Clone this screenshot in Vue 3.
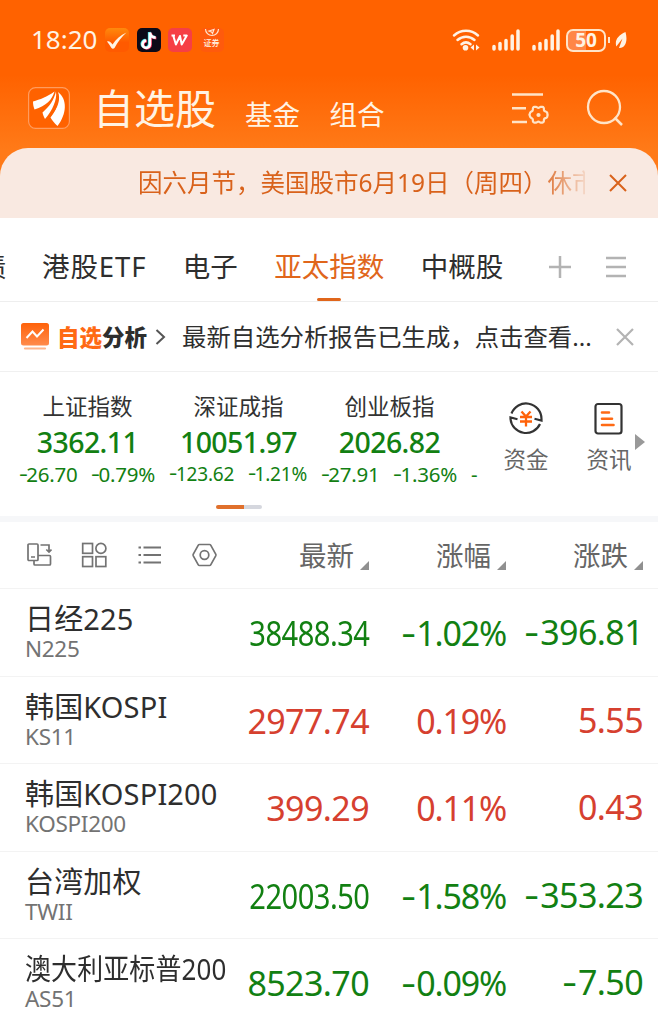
<script setup>
    import { ref } from 'vue'

    const tabs = ['港股ETF', '电子', '亚太指数', '中概股']
    const activeTab = ref('亚太指数')

    const indices = [
        { name: '上证指数', value: '3362.11', diff: '26.70', pct: '0.79%' },
        { name: '深证成指', value: '10051.97', diff: '123.62', pct: '1.21%', small: true },
        { name: '创业板指', value: '2026.82', diff: '27.91', pct: '1.36%' },
    ]

    const columns = ['最新', '涨幅', '涨跌']

    const stocks = [
        { name: '日经225', code: 'N225', price: '38488.34', pct: '1.02%', diff: '396.81', down: true },
        { name: '韩国KOSPI', code: 'KS11', price: '2977.74', pct: '0.19%', diff: '5.55' },
        { name: '韩国KOSPI200', code: 'KOSPI200', price: '399.29', pct: '0.11%', diff: '0.43' },
        { name: '台湾加权', code: 'TWII', price: '22003.50', pct: '1.58%', diff: '353.23', down: true },
        { name: '澳大利亚标普200', code: 'AS51', price: '8523.70', pct: '0.09%', diff: '7.50', down: true, long: true },
    ]
</script>

<template>
    <div class="app">
        <header class="top">
            <div class="status">
                <span class="time">18:20</span>
                <svg class="app-icon" viewBox="0 0 24 24">
                    <defs>
                        <linearGradient id="checkBg" x1="0" y1="0" x2="0" y2="1">
                            <stop offset="0" stop-color="#ff8a0c" />
                            <stop offset=".6" stop-color="#ff5a00" />
                        </linearGradient>
                    </defs>
                    <rect width="24" height="24" rx="5" fill="url(#checkBg)" />
                    <path d="M2 13.500c2-1 4 .5 5.500 3C11 11 15.500 7 21.500 4.500 16.500 9 12.500 14 9.500 20c-1 1-2.500.8-3.200-.2C5 17.500 3.500 15.500 2 13.500z" fill="#fff3e4" />
                </svg>
                <svg class="app-icon" viewBox="0 0 24 24">
                    <rect width="24" height="24" rx="5" fill="#0c0a18" />
                    <g fill="none" stroke-width="2.700">
                        <path d="M12.200 4v11.800a3.700 3.700 0 1 1-3.700-3.700M12.200 4c.4 3 2.500 5 5.800 5.200" stroke="#35e0e4" />
                        <path d="M13.600 5v11.800a3.700 3.700 0 1 1-3.700-3.700M13.600 5c.4 3 2.500 5 5.800 5.200" stroke="#f0305c" />
                        <path d="M12.900 4.500v11.800a3.700 3.700 0 1 1-3.700-3.700M12.900 4.500c.4 3 2.500 5 5.800 5.200" stroke="#fff" />
                    </g>
                </svg>
                <svg class="app-icon" viewBox="0 0 24 24">
                    <rect width="24" height="24" rx="5" fill="#f63f45" />
                    <path d="M3.500 7.500h3.500M5.200 7.500l2.700 9 4.100-8.500 1.700 8.500L18.800 7.500h-3.500" fill="none" stroke="#fff" stroke-width="2" stroke-linejoin="round" />
                </svg>
                <span class="app-icon broker">
                    <svg width="16" height="9" viewBox="0 0 16 9">
                        <path d="M1.500 1a6.500 6.500 0 0 0 13 0M5 3l5-1.500L8.500 5.500 7.500 4z" fill="none" stroke="#ffe6d2" stroke-width="1.200" />
                    </svg>
                    <span>证券</span>
                </span>

                <svg class="wifi" width="28" height="24" viewBox="0 0 28 24">
                    <g fill="none" stroke="#fff3e4" stroke-width="2.500" stroke-linecap="round">
                        <path d="M2 7.500c7-6.200 17-6.200 24 0" />
                        <path d="M5.500 12c5-4.500 12-4.500 17 0" />
                        <path d="M9.500 16.200c2.700-2.200 6.300-2.200 9 0" />
                    </g>
                    <circle cx="13.500" cy="19.700" r="2.800" fill="#fff3e4" />
                    <path d="M22 16.500v6l-3.500-3zM24 16.500v6l3.500-3z" fill="#fff3e4" />
                </svg>
                <svg v-for="n in 2" :key="n" class="signal" width="28" height="22" viewBox="0 0 28 22">
                    <path d="M2 17.500V20M8 14.500V20M14 11.500V20M20.200 7V20M26 2V20" fill="none" stroke="#fff3e4" stroke-width="3.500" stroke-linecap="round" />
                </svg>
                <span class="battery">50</span>
                <span class="battery-tip"></span>
                <svg class="leaf" width="12" height="19" viewBox="0 0 12 19">
                    <path d="M10.500 1C3 4.500-.5 9 1.300 15.500L7.500 7.500 4 17c6.500.5 9-7 6.500-16z" fill="#fff3e4" />
                </svg>
            </div>

            <nav class="nav">
                <svg class="logo" width="42" height="42" viewBox="0 0 42 42">
                    <rect x=".6" y=".6" width="40.800" height="40.800" rx="7" fill="#ff6200" stroke="#ff9c5e" stroke-width="1.200" />
                    <path d="M5 14.500C12 12.500 19 10 26.500 4.500 24 13 18.500 18.500 6.500 22.500 5.500 20 5 17.500 5 14.500z" fill="#fff" />
                    <path d="M28 4.500c1.300 8-3.500 19-11 27.500-1-2-2-4-2.500-6.500C21 20 26 13 28 4.500z" fill="#fff" />
                    <path d="M30 5c2.500 6.500 1 14.500-7.500 25.500 1.500 2.500 3.500 5.500 7 8.500C39 27 39.500 12 30 5z" fill="#fff" />
                    <path d="M29 5c2.800 8-1 18-8.500 26" fill="none" stroke="#ff6200" stroke-width="1.200" />
                </svg>
                <h1>自选股</h1>
                <a class="fund">基金</a>
                <a class="group">组合</a>
                <svg class="list-set" width="40" height="34" viewBox="0 0 40 34">
                    <g fill="none" stroke="#ffe4c8" stroke-width="2.400">
                        <path d="M1 3.500h31M1 17.300h14M1 31h15" />
                        <path d="M22 15.500h2c1 0 1.300 1 2.500 1s1.500-1 2.500-1h2c.5 0 1 .5 1.300 1 .5 1-.2 2 .5 3 .6 1 2.700.8 3.200 2 .4 1 .4 4 0 5-.5 1.200-2.600 1-3.200 2-.7 1 0 2-.5 3-.3.500-.8 1-1.300 1h-2c-1 0-1.300-1-2.500-1s-1.500 1-2.500 1h-2c-.5 0-1-.5-1.300-1-.5-1 .2-2-.5-3-.6-1-2-1-2.500-2l-.9-2.500.9-2.500c.5-1 1.900-1 2.500-2 .7-1 0-2 .5-3 .3-.5.800-1 1.300-1z" transform="translate(3 1.700) scale(.92)" />
                    </g>
                    <circle cx="27.500" cy="24" r="2.100" fill="#ffe4c8" />
                </svg>
                <svg class="search" width="38" height="38" viewBox="0 0 38 38">
                    <circle cx="18" cy="18" r="16" fill="none" stroke="#ffe4c8" stroke-width="2.300" />
                    <path d="M28.500 28.500l7.500 7.500" stroke="#ffe4c8" stroke-width="2.500" />
                </svg>
            </nav>

            <div class="notice">
                <p>因六月节，美国股市6月19日（周四）休市</p>
                <svg width="20" height="20" viewBox="0 0 20 20">
                    <path d="M2 2l16 16M18 2L2 18" stroke="#d9621b" stroke-width="2" />
                </svg>
            </div>
        </header>

        <div class="tabs">
            <span class="cut">债</span>
            <a v-for="tab in tabs" :key="tab" :class="{ active: tab === activeTab }" @click="activeTab = tab">{{ tab }}</a>
            <svg class="plus" width="24" height="24" viewBox="0 0 24 24">
                <path d="M12 1v22M1 12h22" stroke="#b3b3b3" stroke-width="2.500" />
            </svg>
            <svg class="menu" width="22" height="22" viewBox="0 0 22 22">
                <path d="M1 2h20M1 11h20M1 20h20" stroke="#b3b3b3" stroke-width="2.400" />
            </svg>
        </div>

        <div class="analysis">
            <svg class="chart" width="28" height="28" viewBox="0 0 28 28">
                <defs>
                    <linearGradient id="chartBg" x1="0" y1="0" x2="0" y2="1">
                        <stop offset="0" stop-color="#ff6209" />
                        <stop offset="1" stop-color="#ff8b4c" />
                    </linearGradient>
                </defs>
                <rect width="28" height="22.500" rx="2.500" fill="url(#chartBg)" />
                <path d="M5.500 15l6-6.500 4.500 5 6.500-7" fill="none" stroke="#fff" stroke-width="2" />
                <path d="M4 25.500h20" stroke="#ffb58c" stroke-width="2.200" stroke-linecap="round" />
            </svg>
            <strong><em>自选</em>分析</strong>
            <svg class="arrow" width="11" height="18" viewBox="0 0 11 18">
                <path d="M1.500 2l7.500 7-7.500 7" fill="none" stroke="#555" stroke-width="2" />
            </svg>
            <p>最新自选分析报告已生成，点击查看...</p>
            <svg class="close" width="18" height="18" viewBox="0 0 18 18">
                <path d="M1 1l16 16M17 1L1 17" stroke="#b3b3b3" stroke-width="2.200" />
            </svg>
        </div>

        <section class="market">
            <div class="indices">
                <div v-for="item in indices" :key="item.name" class="index" :class="{ small: item.small }">
                    <span class="name">{{ item.name }}</span>
                    <span class="value">{{ item.value }}</span>
                    <span class="change"><span><i>-</i>{{ item.diff }}</span><span><i>-</i>{{ item.pct }}</span></span>
                </div>
                <span class="next">-</span>
            </div>
            <div class="tools">
                <div class="tool">
                    <svg width="36" height="36" viewBox="0 0 36 36">
                        <path d="M3.500 12.500A15.500 15.500 0 0 1 33.500 18v1.500L26.500 17.800M32 23A15.500 15.500 0 0 1 2.500 18v-1.500L9.500 18.200" fill="none" stroke="#333" stroke-width="2.200" />
                        <path d="M13.500 10.500l4.500 5 4.500-5M12 16h12M12 20.500h12M18 15.500v10" fill="none" stroke="#ff6209" stroke-width="2.300" />
                    </svg>
                    <span>资金</span>
                </div>
                <div class="tool">
                    <svg width="36" height="36" viewBox="0 0 36 36">
                        <rect x="4.500" y="3" width="26" height="29.500" rx="2.500" fill="none" stroke="#333" stroke-width="2.200" />
                        <path d="M11 11.500h7M11 17.700h10M11 24h11.500" stroke="#ff6a14" stroke-width="2.600" stroke-linecap="round" />
                    </svg>
                    <span>资讯</span>
                </div>
            </div>
            <span class="more"></span>
            <span class="pager"></span>
        </section>

        <section class="list">
            <div class="row head">
                <div class="views">
                    <svg width="26" height="26" viewBox="0 0 26 26">
                        <g fill="none" stroke="#737373" stroke-width="1.700">
                            <rect x="2" y="2" width="10" height="16.500" rx="1" />
                            <path d="M5 15h4M14.500 3H23v7M20.300 7.500L23 10l2.500-2.500M12 13.500h11.500a1 1 0 0 1 1 1V22a1 1 0 0 1-1 1H9a1 1 0 0 1-1-1v-3.500" />
                        </g>
                    </svg>
                    <svg width="26" height="26" viewBox="0 0 26 26">
                        <g fill="none" stroke="#737373" stroke-width="1.700">
                            <rect x="1.700" y="1.500" width="9.800" height="9.800" />
                            <circle cx="19.900" cy="6.400" r="5" />
                            <rect x="1.700" y="14.700" width="9.800" height="9.800" />
                            <rect x="15" y="14.700" width="9.800" height="9.800" />
                        </g>
                    </svg>
                    <svg width="26" height="26" viewBox="0 0 26 26">
                        <path d="M7.500 5.500H25M7.500 13H25M7.500 20.500H25M2.500 5.500H5M2.500 13H5M2.500 20.500H5" stroke="#737373" stroke-width="2.200" />
                    </svg>
                    <svg width="26" height="26" viewBox="0 0 26 26">
                        <path d="M8.500 2.500h10q.8 0 1.200.7l5 9q.4.800 0 1.600l-5 9q-.4.700-1.200.7h-10q-.8 0-1.200-.7l-5-9q-.4-.8 0-1.600l5-9q.4-.7 1.200-.7z" fill="none" stroke="#737373" stroke-width="1.700" />
                        <circle cx="13.500" cy="13" r="4.300" fill="none" stroke="#737373" stroke-width="1.700" />
                    </svg>
                </div>
                <span v-for="col in columns" :key="col" class="col">{{ col }}</span>
            </div>
            <div v-for="stock in stocks" :key="stock.code" class="row" :class="stock.down ? 'down' : 'up'">
                <div class="stock">
                    <span class="stock-name" :class="{ long: stock.long }">{{ stock.name }}</span>
                    <span class="code">{{ stock.code }}</span>
                </div>
                <span class="num"><b :class="{ narrow: stock.price.length > 7 }">{{ stock.price }}</b></span>
                <span class="num pct"><i v-if="stock.down">-</i>{{ stock.pct }}</span>
                <span class="num last"><i v-if="stock.down">-</i>{{ stock.diff }}</span>
            </div>
        </section>
    </div>
</template>

<style>
    body {
        background: #fff;
        overflow: hidden;
    }
</style>

<style scoped>
    .app {
        width: 658px;
        height: 1026px;
        overflow: hidden;
        background: #fff;
        color: #2e2e2e;
        font-family: 'Noto Sans', 'Noto Sans CJK SC', sans-serif;
        white-space: nowrap;
    }
    svg {
        display: block;
        flex-shrink: 0;
    }
    h1, p {
        margin: 0;
        font-weight: 400;
    }
    i, em {
        font-style: normal;
    }

    .top {
        height: 218px;
        background: linear-gradient(#ff6200 0, #ff6200 75px, #ff7a18 150px);
    }
    .status {
        display: flex;
        align-items: center;
        height: 80px;
        padding-left: 31px;
        color: #fff3e4;
    }
    .time {
        width: 74px;
        font-size: 26px;
        line-height: 30px;
        margin-top: -2px;
    }
    .app-icon {
        width: 24px;
        height: 24px;
        margin-right: 7.500px;
    }
    .broker {
        display: flex;
        flex-direction: column;
        align-items: center;
        border-radius: 5px;
        background: #ff5a0c;
        font-size: 8px;
        line-height: 12px;
        font-weight: 500;
    }
    .wifi {
        margin-left: 221px;
        margin-right: 12px;
    }
    .signal {
        margin-right: 11.500px;
    }
    .signal + .battery {
        margin-left: -5px;
    }
    .battery {
        width: 36px;
        height: 19px;
        border: 2px solid #ffe4c8;
        border-radius: 7px;
        background: linear-gradient(90deg, #ff8648 50%, transparent 50%);
        font-size: 19px;
        font-weight: 700;
        line-height: 19px;
        text-align: center;
    }
    .battery-tip {
        width: 2px;
        height: 6px;
        margin: 0 5px 0 2px;
        background: #ffe4c8;
    }

    .nav {
        display: flex;
        height: 68px;
        padding-left: 28px;
        color: #fff3e4;
    }
    .logo {
        margin-top: 7px;
    }
    .nav h1 {
        width: 152px;
        margin-left: 23px;
        font-size: 41px;
        line-height: 56px;
    }
    .nav a {
        width: 84.500px;
        font-size: 27.500px;
        line-height: 70px;
    }
    .list-set {
        margin: 11px 0 0 97px;
    }
    .search {
        margin: 9px 0 0 35px;
    }

    .notice {
        display: flex;
        align-items: center;
        height: 70px;
        border-radius: 28px 28px 0 0;
        background: #f9e9e1;
        color: #d9621b;
    }
    .notice p {
        width: 447px;
        margin-left: 138px;
        margin-right: 23px;
        overflow: hidden;
        font-size: 24.500px;
        line-height: 40px;
        -webkit-mask-image: linear-gradient(90deg, #000 400px, transparent 455px);
        mask-image: linear-gradient(90deg, #000 400px, transparent 455px);
    }

    .tabs {
        display: flex;
        align-items: center;
        height: 83px;
        border-bottom: 1px solid #eee;
        font-size: 27.500px;
    }
    .cut {
        width: 28px;
        margin-left: -21px;
        margin-right: 35px;
        padding-top: 11px;
    }
    .tabs a {
        display: flex;
        position: relative;
        align-items: center;
        height: 72px;
        margin-right: 36.500px;
        padding-top: 11px;
    }
    .cut + a {
        letter-spacing: .9px;
    }
    .tabs .active {
        color: #e0661b;
    }
    .active::after {
        content: '';
        position: absolute;
        left: 50%;
        bottom: 0;
        width: 24px;
        height: 3.500px;
        margin-left: -12px;
        border-radius: 2px;
        background: #e0661b;
    }
    .tabs svg {
        margin-top: 15px;
    }
    .plus {
        margin-left: 8px;
        margin-right: 33px;
    }

    .analysis {
        display: flex;
        align-items: center;
        height: 69px;
        padding-left: 21px;
        border-bottom: 1px solid #f0f0f0;
    }
    .analysis strong {
        width: 98px;
        margin-left: 8px;
        font-size: 22.500px;
        font-weight: 900;
    }
    .analysis em {
        color: #ff6a14;
    }
    .analysis p {
        width: 434px;
        margin-left: 16px;
        margin-top: -2px;
        font-size: 24.400px;
    }

    .market {
        display: flex;
        position: relative;
        height: 144px;
        border-bottom: 6px solid #f6f7f9;
    }
    .indices {
        display: flex;
        width: 480px;
        padding-left: 12px;
        overflow: hidden;
        box-sizing: border-box;
        color: #128012;
    }
    .index {
        display: flex;
        flex-direction: column;
        flex-shrink: 0;
        align-items: center;
        width: 151px;
        padding-top: 20px;
    }
    .index .name {
        color: #333;
        font-size: 22.500px;
        line-height: 30px;
    }
    .value {
        font-size: 28.500px;
        font-weight: 500;
        line-height: 40px;
        letter-spacing: -.6px;
    }
    .change {
        display: flex;
        gap: 14.500px;
        margin-top: -1px;
        font-size: 20.500px;
        line-height: 26px;
        letter-spacing: -.2px;
    }
    .small .change {
        font-size: 19px;
    }
    .change i, .num i {
        display: inline-block;
        transform: translateY(-.03em) scaleX(1.35);
    }
    .num i {
        margin-right: .1em;
    }
    .next {
        padding-top: 89px;
        margin-left: 6px;
        font-size: 20.500px;
        line-height: 26px;
    }
    .tools {
        display: flex;
        padding-left: 4.500px;
    }
    .tool {
        display: flex;
        flex-direction: column;
        align-items: center;
        width: 83px;
        padding-top: 29px;
        color: #666;
        font-size: 22.500px;
        line-height: 30px;
    }
    .tool span {
        margin-top: 8px;
    }
    .more {
        position: absolute;
        top: 62px;
        right: 13px;
        border-left: 10px solid #999;
        border-top: 8px solid transparent;
        border-bottom: 8px solid transparent;
    }
    .pager {
        position: absolute;
        left: 216px;
        bottom: 7px;
        width: 46px;
        height: 4px;
        border-radius: 2px;
        background: linear-gradient(90deg, #e0702c 28px, #d5d7de 28px);
    }

    .row {
        display: grid;
        grid-template-columns: 232px 137px 137px 137px;
        height: 86.500px;
        border-bottom: 1px solid #f3f3f3;
    }
    .head {
        height: 66px;
    }
    .views {
        display: flex;
        align-items: center;
        gap: 29px;
        padding-left: 26px;
    }
    .col {
        display: flex;
        align-items: center;
        justify-content: flex-end;
        padding-bottom: 2px;
        color: #666;
        font-size: 27.500px;
    }
    .col::after {
        content: '';
        margin: 22px 0 0 6px;
        border-left: 9px solid transparent;
        border-bottom: 9px solid #909090;
    }
    .stock {
        display: flex;
        flex-direction: column;
        align-items: flex-start;
        padding: 12px 0 0 25px;
    }
    .stock-name {
        font-size: 29px;
        line-height: 35px;
        letter-spacing: .15px;
    }
    .long {
        transform: scaleX(.895);
        transform-origin: left;
    }
    .code {
        color: #737373;
        font-size: 22.500px;
        line-height: 26px;
        letter-spacing: -.3px;
    }
    .num {
        color: var(--num);
        text-align: right;
        font-size: 34px;
        line-height: 89px;
        letter-spacing: -.6px;
    }
    .num b {
        display: inline-block;
        font-weight: 400;
    }
    .num .narrow {
        margin-left: -20px;
        transform: scaleX(.855);
        transform-origin: right;
    }
    .down {
        --num: #128012;
    }
    .up {
        --num: #d6402f;
    }
    .pct {
        letter-spacing: -1.200px;
    }
    .last {
        line-height: 87px;
    }
</style>
